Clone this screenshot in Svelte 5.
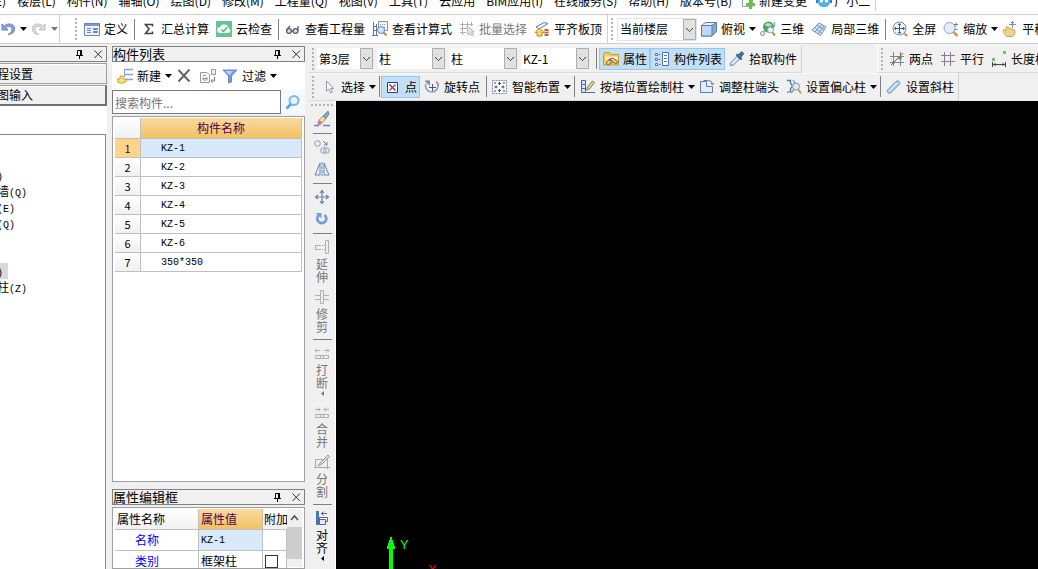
<script lang="ts">
  type Tool = {
    icon: string;
    label: string;
    caret?: boolean;
    active?: boolean;
    disabled?: boolean;
  };

  const icons: Record<string, string> = {
    undo: '<path d="M2 3v6h6L5.800 6.800C8 4.500 12 5 12 8.500c0 2.500-2 4-4 5 5-.5 7-3 6.500-6.500C14 2.500 8 1.500 4.200 5z" fill="#8aa6dc" stroke="#4f72b8" stroke-width=".8"/>',
    redo: '<path d="M14 3v6H8l2.200-2.200C8 4.500 4 5 4 8.500c0 2.500 2 4 4 5-5-.5-7-3-6.500-6.500C2 2.500 8 1.500 11.800 5z" fill="#dcdcdc" stroke="#b4b4b4" stroke-width=".8"/>',
    define: '<path d="M.5 2.500h15v12H.5z" fill="#eef3fb" stroke="#6b83b5"/><path d="M1 3h14v2H1z" fill="#7c97cc"/><path d="M3 7.500h4M3 9.500h4M3 11.500h4" stroke="#6b83b5"/><path d="M9.500 7.500h4v1h-4zm0 3h4v1h-4z" fill="#fff" stroke="#6b83b5"/>',
    sigma: '<path d="M11.500 5.500V3.500H4.500L8 8l-3.500 4.500h7V10.500" fill="none" stroke="#444" stroke-width="1.600"/>',
    cloud: '<path d="M0 0h16v16H0z" fill="#66c492"/><path d="M4 12a3 3 0 0 1 0-6 4.500 4.500 0 0 1 8.500 1 2.600 2.600 0 0 1 0 5z" fill="#eefaf3"/><path d="m5.500 8.500 2 2 3.500-4" fill="none" stroke="#55a878" stroke-width="1.300"/>',
    glasses: '<g fill="#dbe3ec" stroke="#55606e" stroke-width="1.300"><circle cx="4" cy="10" r="2.400"/><circle cx="10.500" cy="10" r="2.400"/><path d="M6.600 10h1.300M1.500 9 5 5M13 9.500V5" fill="none"/></g>',
    formula: '<path d="M6.500.5h9v9h-9z" fill="#f2f4f8" stroke="#8992a5"/><path d="M8 3.500h6M8 6.500h6" stroke="#8992a5" stroke-dasharray="1 1"/><path d="M1.500 1v13M4.500 3v11M0 14.500h6M1.500 5.500h3M1.500 9.500h3" fill="none" stroke="#5f79a8"/><circle cx="9" cy="9" r="3.500" fill="#cfe5fa" stroke="#5f87bd"/><path d="m11.500 11.500 3 3" stroke="#c9853a" stroke-width="2"/>',
    batch: '<path d="M1 3.500h13M1 7.500h7M1 11.500h6M3.500 1v13M8.500 1v5M12.500 1v4" stroke="#b0b0b0"/><path d="m8 5 1 9 2-2 2 3 1.500-1-2-3h3z" fill="#e8e8e8" stroke="#aaa" stroke-width=".8"/>',
    slab: '<path d="m2 6 8-4.500 4 1L5 8z" fill="#eef4ff" stroke="#5b7ab0"/><path d="M1 11.500 5.500 7l4.500 4.500H8V15H3v-3.500z" fill="#ffd65c" stroke="#b98a28"/><path d="M10.500 8h4v7h-4z" fill="#b7604a"/><path d="M10.500 10.500h4m-4 2h4" stroke="#eecbbd"/>',
    cube: '<path d="m.5 4.500 4-3h11v9l-4.500 4.500H.5z" fill="#86add9" stroke="#5b7fa5"/><path d="M.5 4.500H11V15H.5z" fill="#bfd9f2" stroke="#5b7fa5"/><path d="m1 4 4-2h9.500L11 4z" fill="#e4f1fd"/><path d="m11 4.500 4-3" stroke="#5b7fa5"/>',
    orbit: '<circle cx="8.500" cy="6" r="5.500" fill="#4aa557"/><path d="M5 4c2-3 5-2 7 0-2 2-5 2-7 0z" fill="#b5e3bb"/><circle cx="2.500" cy="12.500" r="2" fill="#e3eef8" stroke="#7295b4"/><path d="M4 11c1-2 2-3 3-3" fill="none" stroke="#7295b4"/><circle cx="10.500" cy="9" r="3" fill="#e8f4f8" stroke="#8fa6ba"/><path d="m12.500 11.500 2.500 3" stroke="#c98b3a" stroke-width="2"/><path d="M14 1l1 2-1 3" fill="none" stroke="#7295b4"/>',
    local3d: '<path d="m1 9 7-7 7 4-5.500 8.500z" fill="#d3e7f7" stroke="#6d92b5"/><path d="m3.500 6.500 7 5.500M6 4.500l7 4M4 11l6.500-7M7 13l6-8" fill="none" stroke="#6d92b5"/>',
    full: '<circle cx="7.500" cy="7.500" r="6.500" fill="#eef5fd" stroke="#7089aa"/><path d="M7.500 2.500v10m-5-5h10M6 4l1.500-1.500L9 4M6 11l1.500 1.500L9 11M4 6 2.500 7.500 4 9m7-3 1.500 1.500L11 9" fill="none" stroke="#3f5e8c"/><path d="m12.500 12.500 2.500 2.500" stroke="#d08f38" stroke-width="2.200"/>',
    zoom: '<circle cx="6.500" cy="7" r="5.500" fill="#e4edf7" stroke="#93a6bd"/><path d="m10.500 11 4 4" stroke="#d49a49" stroke-width="2.500"/><path d="M11 3.500h4M13 1.500v4M11.500 8.500h3" stroke="#6480a5"/>',
    pan: '<path d="M1 9c1-1 2 0 3 1V6c1-1 2 0 2 1 1-1 2 0 2 1 1-1 2 0 2 1 1-1 3 0 3 1 0 3-1 5-3 5.500H5C3 14 1 11 1 9z" fill="#f5d28c" stroke="#c9a25c"/><path d="M10.500 0v7M7 3.500h7M9 2l1.500-1.500L12 2" fill="none" stroke="#7b8da6"/>',
    props: '<path d="M.5 3.500V14h15V3.500H8l-1.500-2h-5z" fill="#ffc94d" stroke="#c9973a"/><path d="M2 5.500h13v3H2z" fill="#fff3cf"/><path d="m3 12 4-4 3-1 5 4-2 2-3-2-2 1-3 2z" fill="#efc493" stroke="#5a5040" stroke-width=".8"/><path d="m6 8 3 2.500" stroke="#367452" stroke-width="1.500"/>',
    list: '<path d="M1.500 2.500h2v2h-2zm0 5h2v2h-2zm0 5h2v2h-2z" fill="#fff" stroke="#5173ad"/><path d="M5 3.500h2M5 8.500h2M5 13.500h2" stroke="#555" stroke-dasharray="1 1"/><path d="M8.500 1.500h6v13h-6z" fill="#fff" stroke="#5173ad"/><path d="M10 4.500h3M10 7.500h3M10 10.500h3" stroke="#5173ad"/>',
    picker: '<path d="m1.500 14.500.5-3L8 5.500l2.500 2.500-6 6z" fill="#dff0fb" stroke="#557fae"/><path d="m7 4 5 5 1-1-1-2 2.500-2.500c1-1-1.500-3.500-2.500-2.500L9.500 3.500 8 3z" fill="#3f6fab" stroke="#2f527e" stroke-width=".6"/>',
    twopoint: '<path d="M4.500 1v14M11.500 1v14M1 5.500h14M1 11.500h14" stroke="#7b84a0"/><path d="M2 14 14 2" stroke="#c23b3b"/><path d="M9.500 5.500h3v3h-3z" fill="#4e9d45"/><path d="M3.500 10.500h2v2h-2z" fill="#4e9d45"/>',
    parallel: '<path d="M4.500 1v14M10.500 1v14" stroke="#6b83b5"/><path d="M1 4.500h14M1 10.500h14" stroke="#bd6b6b"/>',
    length: '<path d="M1 7h3v3H1zM12 0h3v3h-3z" fill="#6cc36c"/><path d="M1.500 11v5M14.500 11v5M2 13.500h12M4.500 12 3 13.500 4.500 15m7-3 1.500 1.500-1.500 1.500" fill="none" stroke="#444"/>',
    pointer: '<path d="M5.500 2v10l2.200-2 1.800 4 2-1-2-3.500h3z" fill="#fff" stroke="#8b98ac"/>',
    point: '<path d="M2.500 3.500h10v10h-10z" fill="#fff" stroke="#27408b"/><path d="m4.500 5.500 6 6" stroke="#27408b" stroke-width="1.300"/><path d="m10.500 5.500-6 6" stroke="#c8304c" stroke-width="1.300"/>',
    rotpoint: '<path d="M2 4.500a6.200 6.200 0 1 0 11-1" fill="none" stroke="#8ba2c4" stroke-width="1.600"/><path d="M12 2.500c1.500 1 2.300 2.500 2.300 4.500" fill="none" stroke="#cc8a94" stroke-width="1.600"/><path d="M.5 1.500h5.500v5.500z" fill="#6f8bb3"/><path d="M8.500 5v7M5 8.500h7" stroke="#4d5a70"/>',
    smart: '<path d="M.5 1.500h14v13H.5z" fill="#fff" stroke="#7b8aa8" stroke-dasharray="2 1"/><path d="M7.500 3v3M7.500 10v3M2.500 8h3M9.500 8h3M6 4.500h3M6 11.500h3M4 6.500v3M11 6.500v3" stroke="#33476e"/><path d="M2 3h2v2H2zm9 0h2v2h-2zm-9 8h2v2H2zm9 0h2v2h-2z" fill="#8ea0c0"/>',
    wallcol: '<path d="M1.500 1.500h4v4h-4zm0 4h4v4h-4zm0 4h4v4h-4z" fill="#d5e3fa" stroke="#4668ad"/><path d="M5 13.500h10" stroke="#4668ad"/><path d="m6.500 11 1-3L12.500 2l2 1.500-5 6.500z" fill="#e7d2a0" stroke="#8c7a50"/>',
    colend: '<path d="M1.500 2.500h6v5h6v6h-12z" fill="#e2ecfa" stroke="#5f7eb0"/><path d="M4.500 1.500h5a4 4 0 0 1 4 4M12 4l1.500 2L15 4" fill="none" stroke="#5f7eb0"/>',
    eccentric: '<path d="M1 1.500h3.500v3L6 6v2L4.500 9.500v3L1 13.500" fill="none" stroke="#4b79b5" stroke-width="1.300"/><circle cx="10" cy="7.500" r="3.500" fill="#d9e8f5" stroke="#8295ac"/><path d="m12 10 3 4.500" stroke="#d79b48" stroke-width="2"/><path d="m7 1 2 3m-4 10 3-3.500" stroke="#8295ac" stroke-width="1.300"/>',
    slant: '<path d="M2 13.500c-1-1-1-2 0-3l8-8c1.500-1 3-.5 3.500.5s0 2-1 3l-8 8c-1 .8-2 .3-2.500-.5z" fill="#b4d6f6" stroke="#5e8cc0"/><path d="m4 11 7-7" stroke="#fff"/>',
    add: '<path d="M7.500 1.500H16M7.500 6.500H16M7.500 11.500H16" stroke="#8ba2c6" stroke-width="1.500"/><path d="M7.500 1v8" stroke="#8ba2c6"/><path d="M3 8h3v3h3v3H6v3H3v-3H0v-3h3z" fill="#ffe46a" stroke="#b2903c" stroke-width=".8"/>',
    remove: '<path d="m.5 2 11 11.500M11.500 1.500.5 13.500" stroke="#666" stroke-width="2"/>',
    copy: '<path d="M.5 4.500h6l3 2v8h-9z" fill="#fff" stroke="#8c99b5"/><path d="M3 7.500h3M3 10.500h4M3 9v3h4V9" fill="none" stroke="#8c99b5"/><path d="M11.500 1.500h4v5h-4z" fill="#eef" stroke="#8c99b5"/><path d="M14.500 9v4H11m1.500-2L11 13l1.500 1.500" fill="none" stroke="#5f7eca"/>',
    filter: '<path d="M1 2h14L9.500 8v6l-3 1V8z" fill="#75a2e2" stroke="#6387c8"/><path d="M3 3h8L7.500 7z" fill="#b6d2f8"/>',
    search: '<circle cx="9" cy="6.500" r="4.500" fill="#e5f4fd" stroke="#7cbbe8" stroke-width="2"/><path d="m6 10-4.500 4.500" stroke="#5aa2dc" stroke-width="2.600"/>',
    brush: '<path d="m5 9 4-4 3 2.500-4 4.500z" fill="#f4dc98" stroke="#8b7a5b" stroke-width=".7"/><path d="m9 5 5-5 1 3-3 4.500z" fill="#8da6cd" stroke="#566d94" stroke-width=".7"/><path d="m5 9 3 3-1.500 2C4 15 2 12 5 9z" fill="#e56aa0"/><path d="M0 14.500h5M9 14.500h7" stroke="#6884b4" stroke-width="1.500"/>',
    vcopy: '<circle cx="3.500" cy="4.500" r="2.800" fill="none" stroke="#8b9bb5"/><circle cx="9.500" cy="11.500" r="2.800" fill="none" stroke="#8b9bb5"/><circle cx="12.500" cy="11.500" r="2.800" fill="none" stroke="#8b9bb5"/><path d="m9 2 4 4m0-3v3h-3" fill="none" stroke="#5f7fb0"/>',
    mirror: '<path d="M6 2v12H1zM10 2v12h5z" fill="#eaf0fb" stroke="#6482bd"/><path d="M8 1v14" stroke="#6482bd" stroke-dasharray="3 1"/>',
    move: '<path d="M8 2v12M2 8h12M6 4l2-2.500L10 4m-4 8 2 2.500 2-2.500M4 6 1.500 8 4 10m8-4 2.500 2-2.500 2" fill="none" stroke="#6b84a8" stroke-width="1.200"/>',
    rotate: '<path d="M10.500 4a4.500 4.500 0 1 1-6 .5" fill="none" stroke="#7a9cd6" stroke-width="2.800"/><path d="M1.500 2h6v5.500z" fill="#7a9cd6"/>',
    extend: '<path d="M1 6.500h6M1 10.500h6M1.500 6v5" stroke="#b0b0b0"/><path d="M8 6.500h3M8 10.500h3" stroke="#b0b0b0" stroke-dasharray="1 1"/><path d="M11.500 1.500h3v13h-3z" fill="#eee" stroke="#b0b0b0"/>',
    trim: '<path d="M1 6.500h5M1 10.500h5M10 6.500h5M10 10.500h5" stroke="#b0b0b0"/><path d="M6.500 1.500h3v13h-3z" fill="#eee" stroke="#b0b0b0"/>',
    split: '<path d="M1 5.500h5M3 3.500l-2 2 2 2M10 5.500h5m-2-2 2 2-2 2" fill="none" stroke="#b0b0b0"/><path d="M1.500 10.500h13v3h-13zM6.500 10.500v3m3-3v3" fill="#eee" stroke="#b0b0b0"/>',
    merge: '<path d="M1 5.500h5M4 3.500l2 2-2 2M10 5.500h5m-3-2-2 2 2 2" fill="none" stroke="#b0b0b0"/><path d="M1.500 10.500h13v3h-13zM6.500 10.500v3m3-3v3" fill="#eee" stroke="#b0b0b0"/>',
    divide: '<path d="M1.500 5.500h12v8h-12zM0 13.500h16M13.500 4v11" fill="#eee" stroke="#aaa"/><path d="m4 12 3-4 7-7 1.500 1.500-7 7z" fill="#ddd" stroke="#999"/>',
    align: '<path d="M2 1h3v14H2z" fill="#4a76ac"/><path d="M7 3.500h6M9.500 1.500l-2 2 2 2" fill="none" stroke="#4169b0"/><path d="M5.500 7.500h8v4h-8z" fill="#fff" stroke="#b8404b"/><path d="M5.500 9.500h6v5h-6z" fill="#dfe9fb" stroke="#4169b0"/>',
    change: '<path d="M1.500.5h8l2 2v11h-10z" fill="#fff" stroke="#8aa5c6"/><path d="M8 7h3v3h3v3h-3v3H8v-3H5v-3h3z" fill="#6cc243"/>',
    user: '<path d="M2 2h12v6c0 4-2 6-6 6S2 12 2 8z" fill="#4fb1ec"/><circle cx="5.500" cy="8" r="1.600" fill="#fff"/><circle cx="10.500" cy="8" r="1.600" fill="#fff"/><path d="M0 6h2v4H0zM14 6h2v4h-2z" fill="#2584c6"/>',
    pin: '<path d="M5.500 9V4.500h4M4 9.500h7M7.500 10v3" fill="none" stroke="#000"/><path d="M8 4h2v5H8z" fill="#000"/>',
    close: '<path d="m4.500 4.500 7.500 7.500m0-7.500L4.500 12" stroke="#333"/>',
  };

  const menus = [
    "E)", "楼层(L)", "构件(N)", "辅轴(O)", "绘图(D)", "修改(M)", "工程量(Q)", "视图(V)", "工具(T)",
    "云应用", "BIM应用(I)", "在线服务(S)", "帮助(H)", "版本号(B)",
  ];

  const calcTools: (Tool | null)[] = [
    { icon: "define", label: "定义" },
    null,
    { icon: "sigma", label: "汇总计算" },
    { icon: "cloud", label: "云检查" },
    null,
    { icon: "glasses", label: "查看工程量" },
    { icon: "formula", label: "查看计算式" },
    { icon: "batch", label: "批量选择", disabled: true },
    { icon: "slab", label: "平齐板顶" },
  ];

  const viewTools: (Tool | null)[] = [
    { icon: "cube", label: "俯视", caret: true },
    { icon: "orbit", label: "三维" },
    { icon: "local3d", label: "局部三维" },
    null,
    { icon: "full", label: "全屏" },
    { icon: "zoom", label: "缩放", caret: true },
    { icon: "pan", label: "平移" },
  ];

  const panelTools: (Tool | null)[] = [
    null,
    { icon: "props", label: "属性", active: true },
    { icon: "list", label: "构件列表", active: true },
    { icon: "picker", label: "拾取构件" },
  ];

  const axisTools: (Tool | null)[] = [
    { icon: "twopoint", label: "两点" },
    { icon: "parallel", label: "平行" },
    { icon: "length", label: "长度标注" },
  ];

  const drawTools: (Tool | null)[] = [
    { icon: "pointer", label: "选择", caret: true },
    null,
    { icon: "point", label: "点", active: true },
    { icon: "rotpoint", label: "旋转点" },
    null,
    { icon: "smart", label: "智能布置", caret: true },
    null,
    { icon: "wallcol", label: "按墙位置绘制柱", caret: true },
    { icon: "colend", label: "调整柱端头" },
    { icon: "eccentric", label: "设置偏心柱", caret: true },
    null,
    { icon: "slant", label: "设置斜柱" },
  ];

  const editTools: (Tool | null)[] = [
    { icon: "brush", label: "" },
    null,
    { icon: "vcopy", label: "" },
    { icon: "mirror", label: "" },
    null,
    { icon: "move", label: "" },
    { icon: "rotate", label: "" },
    null,
    { icon: "extend", label: "延伸", disabled: true },
    { icon: "trim", label: "修剪", disabled: true },
    null,
    { icon: "split", label: "打断", caret: true, disabled: true },
    { icon: "merge", label: "合并", disabled: true },
    { icon: "divide", label: "分割", disabled: true },
    null,
    { icon: "align", label: "对齐", caret: true },
  ];

  const combos = [
    { value: "第3层", wide: false },
    { value: "柱", wide: true },
    { value: "柱", wide: true },
    { value: "KZ-1", wide: true },
  ];

  const tree = [
    { cjk: "", key: "" },
    { cjk: "", key: "" },
    { cjk: "", key: ")" },
    { cjk: "墙", key: "(Q)" },
    { cjk: "", key: "(E)" },
    { cjk: "", key: "(Q)" },
    { cjk: "", key: "" },
    { cjk: "", key: "" },
    { cjk: "", key: ")", selected: true },
    { cjk: "柱", key: "(Z)" },
  ];

  const members = ["KZ-1", "KZ-2", "KZ-3", "KZ-4", "KZ-5", "KZ-6", "350*350"];
  let selected = $state(0);
  let keyword = $state("");
  let extra = $state(false);
</script>

{#snippet icon(name: string)}
  <svg class="icon" viewBox="0 0 16 16" fill="none" aria-hidden="true">{@html icons[name]}</svg>
{/snippet}

{#snippet caret()}
  <svg class="caret" viewBox="0 0 7 4" aria-hidden="true"><path d="M0 0h7L3.500 4z" fill="currentColor" /></svg>
{/snippet}

{#snippet tools(items: (Tool | null)[])}
  {#each items as item}
    {#if item}
      <button class="tool" class:active={item.active} class:drop={item.caret} disabled={item.disabled}>
        {@render icon(item.icon)}
        <span>{item.label}</span>
        {#if item.caret}{@render caret()}{/if}
      </button>
    {:else}
      <span class="sep"></span>
    {/if}
  {/each}
{/snippet}

{#snippet combo(value: string, label: string, wide: boolean)}
  <div class="combo" class:wide>
    <select aria-label={label}><option>{value}</option></select>
    <svg class="arrow" viewBox="0 0 13 21" aria-hidden="true">
      <path d="M.5.5h12v20H.5z" fill="#e1e1e1" stroke="#adadad" />
      <path d="m3 9 3.500 3.500L10 9" fill="none" stroke="#444" />
    </svg>
  </div>
{/snippet}

{#snippet titlebar(text: string)}
  <header class="titlebar">
    <h2>{text}</h2>
    <button aria-label="pin">{@render icon("pin")}</button>
    <button aria-label="close">{@render icon("close")}</button>
  </header>
{/snippet}

<div class="app">
  <nav class="menubar">
    {#each menus as menu}
      <button>{menu}</button>
    {/each}
    <button>{@render icon("change")}新建变更</button>
    <button>{@render icon("user")}广小二</button>
  </nav>

  <div class="toolbar-row top">
    <div class="toolbar history">
      <button aria-label="undo">{@render icon("undo")}{@render caret()}</button>
      <button aria-label="redo" disabled>{@render icon("redo")}{@render caret()}</button>
    </div>
    <div class="toolbar calc">
      <span class="grip"></span>
      {@render tools(calcTools)}
    </div>
    <div class="toolbar view">
      <span class="grip"></span>
      <div class="floor">{@render combo("当前楼层", "floor range", true)}</div>
      {@render tools(viewTools)}
    </div>
  </div>

  <div class="workspace">
    <aside class="modules">
      {@render titlebar("")}
      <button class="module">程设置</button>
      <button class="module pressed">图输入</button>
      <div class="blank"></div>
      <ul class="tree">
        {#each tree as node}
          <li class:selected={node.selected}>{node.cjk}<span class="mono">{node.key}</span></li>
        {/each}
      </ul>
    </aside>

    <div class="docks">
      <section class="members">
        {@render titlebar("构件列表")}
        <div class="panel-tools">
          <button>{@render icon("add")}新建{@render caret()}</button>
          <button aria-label="delete">{@render icon("remove")}</button>
          <button aria-label="copy">{@render icon("copy")}</button>
          <button>{@render icon("filter")}过滤{@render caret()}</button>
        </div>
        <div class="search">
          <input type="text" placeholder="搜索构件..." aria-label="search" bind:value={keyword} />
          <button aria-label="search">{@render icon("search")}</button>
        </div>
        <div class="box">
          <table class="list">
            <thead>
              <tr><th class="num"></th><th class="gold">构件名称</th></tr>
            </thead>
            <tbody>
              {#each members as name, i}
                <tr class:selected={selected === i} onclick={() => (selected = i)}>
                  <th class="num">{i + 1}</th>
                  <td class="mono">{name}</td>
                </tr>
              {/each}
            </tbody>
          </table>
        </div>
      </section>

      <section class="properties">
        {@render titlebar("属性编辑框")}
        <div class="box props">
          <table class="attrs">
            <thead>
              <tr><th>属性名称</th><th class="gold">属性值</th><th class="extra">附加</th></tr>
            </thead>
            <tbody>
              <tr><td class="key">名称</td><td class="mono current">KZ-1</td><td></td></tr>
              <tr>
                <td class="key">类别</td>
                <td>框架柱</td>
                <td><input type="checkbox" aria-label="附加" bind:checked={extra} /></td>
              </tr>
            </tbody>
          </table>
          <div class="scrollbar">
            <svg viewBox="0 0 15 18" aria-hidden="true"><path d="m4 11 3.500-4 3.500 4" fill="none" stroke="#505050" stroke-width="1.600" /></svg>
            <div class="thumb"></div>
          </div>
        </div>
      </section>
    </div>

    <main>
      <div class="toolbar-row">
        <div class="toolbar">
          <span class="grip"></span>
          {#each combos as c, i}
            {@render combo(c.value, `filter ${i + 1}`, c.wide)}
          {/each}
          {@render tools(panelTools)}
        </div>
        <div class="toolbar axis">
          <span class="grip"></span>
          {@render tools(axisTools)}
        </div>
      </div>
      <div class="toolbar-row">
        <div class="toolbar draw">
          <span class="grip"></span>
          {@render tools(drawTools)}
        </div>
      </div>

      <div class="drawing">
        <div class="edit-bar">
          <span class="grip flat"></span>
          {#each editTools as item}
            {#if item}
              <button disabled={item.disabled} aria-label={item.label || item.icon}>
                {@render icon(item.icon)}
                {#if item.label}<span>{item.label}</span>{/if}
                {#if item.caret}
                  <svg class="side-caret" viewBox="0 0 3 5" aria-hidden="true"><path d="M3 0v5L0 2.500z" fill="currentColor" /></svg>
                {/if}
              </button>
            {:else}
              <span class="line"></span>
            {/if}
          {/each}
        </div>
        <div class="canvas">
          <svg class="axes" viewBox="0 0 110 35">
            <path d="M53 35V15h-2v-3h1V9h1V6h1V3h2v3h1v3h1v3h1v3h-2v20z" fill="#0f0" />
            <text x="64" y="15" fill="#0f0">Y</text>
            <text x="92" y="40" fill="#f00">X</text>
          </svg>
        </div>
      </div>
    </main>
  </div>
</div>

<style>
  :global(body) {
    margin: 0;
    overflow: hidden;
  }

  .app {
    display: flex;
    flex-direction: column;
    height: 100vh;
    overflow: hidden;
    background: #f0f0f0;
    color: #000;
    font: 12px/16px "Noto Sans CJK SC", sans-serif;
  }

  button {
    display: flex;
    align-items: center;
    flex-shrink: 0;
    margin: 0;
    padding: 0;
    border: 0;
    background: none;
    color: inherit;
    font: inherit;
    white-space: nowrap;
  }

  .icon {
    flex-shrink: 0;
    width: 16px;
    height: 16px;
  }

  .caret {
    flex-shrink: 0;
    width: 7px;
    height: 4px;
  }

  .mono {
    font-family: "Liberation Mono", monospace;
    font-size: 10px;
  }

  /* menu and toolbars */
  .menubar {
    display: flex;
    align-items: flex-end;
    gap: 11px;
    height: 14px;
    margin-left: -5px;
    background: #fff;
    border-bottom: 1px solid #d0d0d0;
  }

  .menubar button {
    gap: 2px;
    height: 20px;
    margin-bottom: 3px;
  }

  .menubar button:nth-last-child(-n + 2) {
    margin-left: -2px;
  }

  .menubar button:last-child {
    padding-right: 5px;
    border-right: 1px solid #d0d0d0;
  }

  .toolbar-row {
    display: flex;
    height: 28px;
  }

  .toolbar-row.top {
    background: #fff;
    border-bottom: 1px solid #d0d0d0;
  }

  .toolbar {
    display: flex;
    align-items: center;
    flex-shrink: 0;
    padding: 0 1px 0 3px;
    border-right: 1px solid #d0d0d0;
    border-bottom: 1px solid #d8d8d8;
    box-shadow: inset 0 1px #fafafa;
  }

  .top .toolbar {
    border-bottom: 0;
  }

  .history {
    gap: 4px;
    padding: 0 1px 0 0;
  }

  .history button {
    gap: 4px;
  }

  .history button:disabled {
    color: #777;
  }

  .calc {
    padding: 0 2px 0 15px;
  }

  .grip {
    width: 2px;
    height: 22px;
    margin-right: 3px;
    background: repeating-linear-gradient(#b4b4b4 0 2px, transparent 2px 4px);
  }

  .view .grip {
    margin-right: 5px;
  }

  .axis .grip {
    margin-right: 2px;
  }

  .tool {
    gap: 4px;
    height: 22px;
    padding: 0 3px 0 4px;
    box-sizing: border-box;
  }

  .tool.drop {
    padding-right: 0;
  }

  .tool.active {
    background: #c2dff5;
    box-shadow: inset 0 0 0 1px #90c8f6;
  }

  .tool:disabled {
    color: #777;
  }

  .sep {
    width: 1px;
    height: 21px;
    margin: 0 2px 0 3px;
    background: #808080;
  }

  .draw .sep {
    margin-right: 1px;
  }

  .combo {
    position: relative;
    width: 56px;
    margin-right: 4px;
  }

  .combo.wide {
    width: 68px;
  }

  .floor .combo {
    width: 78px;
    margin-right: 1px;
    box-shadow: 0 0 0 1px #e4e4e4;
  }

  .combo select {
    display: block;
    width: 100%;
    height: 21px;
    padding: 0 14px 0 2px;
    appearance: none;
    border: 0;
    border-radius: 0;
    background: #fff;
    color: #000;
    font: inherit;
  }

  .arrow {
    position: absolute;
    top: 0;
    right: 0;
    width: 13px;
    height: 21px;
    pointer-events: none;
  }

  /* docked panels */
  .workspace {
    display: grid;
    grid-template-columns: 107px 194px 1fr;
    column-gap: 4px;
    flex: 1;
    min-height: 0;
    padding-top: 1px;
  }

  .titlebar {
    display: flex;
    align-items: center;
    flex-shrink: 0;
    gap: 2px;
    height: 16px;
    border: 1px solid #808080;
    box-sizing: border-box;
  }

  .titlebar h2 {
    flex: 1;
    margin: 0;
    font-size: 13px;
    font-weight: 400;
    line-height: 14px;
  }

  .modules {
    display: flex;
    flex-direction: column;
    min-height: 0;
    padding-top: 1px;
    overflow: hidden;
  }

  .modules .titlebar {
    border-left: 0;
  }

  .module {
    height: 21px;
    margin: 1px 0 0 -4px;
    border: 1px solid #a0a0a0;
    box-sizing: border-box;
    padding-left: 0;
    box-shadow: inset 0 1px #fff;
  }

  .module.pressed {
    border-right: 2px solid #707070;
    border-bottom: 2px solid #707070;
  }

  .blank {
    height: 28px;
    background: #fff;
  }

  .tree {
    flex: 1;
    margin: 0 1px 0 -3px;
    padding: 0;
    border: 1px solid #808890;
    border-width: 1px 1px 0 0;
    background: #fff;
    list-style: none;
  }

  .tree li {
    width: fit-content;
    height: 16px;
    white-space: nowrap;
  }

  .tree li.selected {
    padding-right: 5px;
    background: #d9d9d9;
  }

  .docks {
    display: flex;
    flex-direction: column;
    gap: 7px;
    min-height: 0;
    overflow: hidden;
    padding: 1px 0 0 1px;
  }

  .members {
    display: flex;
    flex-direction: column;
    flex: 1;
    min-height: 0;
  }

  .properties {
    display: flex;
    flex-direction: column;
    flex: 0 0 80px;
    min-height: 0;
  }

  .panel-tools {
    display: flex;
    align-items: center;
    gap: 6px;
    height: 28px;
    padding-left: 5px;
    background: #fff;
  }

  .panel-tools button {
    gap: 4px;
  }

  .search {
    display: flex;
    background: #f4f9fd;
  }

  .search input {
    flex: 1;
    min-width: 0;
    height: 24px;
    padding: 0 2px;
    border: 1px solid #7a7a7a;
    border-radius: 0;
    box-sizing: border-box;
    font: inherit;
  }

  .search input::placeholder {
    color: #757575;
    opacity: 1;
  }

  .search button {
    padding: 0 4px;
  }

  .box {
    flex: 1;
    margin-top: 2px;
    padding: 1px 2px;
    border: 1px solid #a0a0a0;
    background: #fff;
    overflow: hidden;
  }

  table {
    width: 100%;
    border-collapse: separate;
    border-spacing: 0;
    table-layout: fixed;
  }

  th,
  td {
    padding: 0;
    border: 1px solid #c0c0c0;
    border-width: 0 1px 1px 0;
    font-weight: 400;
    line-height: 18px;
  }

  th {
    background: linear-gradient(#fff, #f0f0f0);
  }

  td.mono {
    padding-top: 2px;
    line-height: 16px;
  }

  .gold {
    background: linear-gradient(#fad9a0, #f2c161);
    color: #500050;
  }

  .list .num {
    width: 25px;
    font-size: 11px;
  }

  .list thead th {
    height: 20px;
    line-height: 20px;
  }

  .list td {
    padding-left: 20px;
  }

  .list .selected td,
  .current {
    background: #d8eaf9;
  }

  .list .selected .num {
    background: #ffd48a;
    color: #500050;
  }

  .props {
    display: flex;
    flex: 1;
    min-height: 0;
  }

  .attrs {
    flex: 1;
    width: 0;
    align-self: flex-start;
  }

  .attrs th,
  .attrs td {
    height: 21px;
    padding-left: 2px;
    box-sizing: border-box;
    text-align: left;
    overflow: hidden;
    white-space: nowrap;
  }

  .attrs th:nth-child(2) {
    width: 64px;
  }

  .attrs .extra {
    width: 24px;
    border-right: 0;
    padding-left: 1px;
  }

  .attrs .key {
    padding-left: 20px;
    color: #00f;
  }

  .attrs input {
    display: block;
    appearance: none;
    width: 13px;
    height: 13px;
    margin: 0;
    border: 1px solid #333;
    box-sizing: border-box;
    background: #fff;
  }

  .scrollbar {
    width: 15px;
    background: #f0f0f0;
  }

  .scrollbar svg {
    display: block;
    width: 15px;
    height: 18px;
  }

  .thumb {
    height: 32px;
    background: #cdcdcd;
  }

  /* drawing area */
  main {
    display: flex;
    flex-direction: column;
    min-width: 0;
    min-height: 0;
    overflow: hidden;
  }

  .axis {
    margin-left: 75px;
    border-left: 1px solid #fff;
  }

  .drawing {
    display: flex;
    flex: 1;
    min-height: 0;
  }

  .edit-bar {
    display: flex;
    flex-direction: column;
    align-items: center;
    flex: 0 0 27px;
    padding-top: 3px;
    border-right: 1px solid #fff;
    box-sizing: border-box;
    overflow: hidden;
  }

  .grip.flat {
    flex-shrink: 0;
    width: 22px;
    height: 2px;
    margin: 0 0 2px;
    background: repeating-linear-gradient(90deg, #b4b4b4 0 2px, transparent 2px 4px);
  }

  .edit-bar button {
    flex-direction: column;
    padding: 3px 0;
  }

  .edit-bar button:disabled {
    color: #777;
  }

  .edit-bar span:not(.line, .grip) {
    width: 12px;
    margin-top: 2px;
    line-height: 13px;
    white-space: normal;
    word-break: break-all;
  }

  .line {
    flex-shrink: 0;
    width: 19px;
    height: 1px;
    margin: 3px 0 2px;
    background: #808080;
  }

  .side-caret {
    width: 3px;
    height: 5px;
    margin: 2px 0;
  }

  .canvas {
    display: flex;
    align-items: flex-end;
    flex: 1;
    background: #000;
    overflow: hidden;
  }

  .axes {
    width: 110px;
    height: 35px;
    overflow: hidden;
    font: 13px "Liberation Sans", sans-serif;
  }
</style>
